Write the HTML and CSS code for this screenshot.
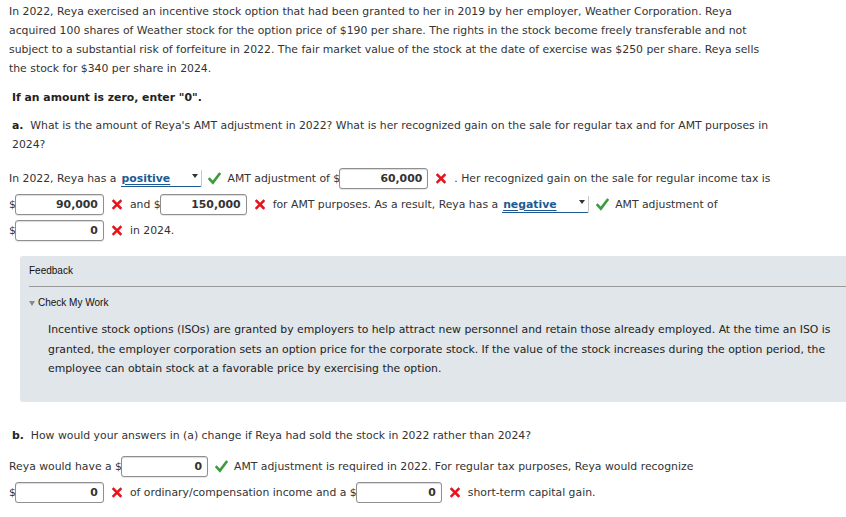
FILE: index.html
```html
<!DOCTYPE html>
<html>
<head>
<meta charset="utf-8">
<link rel="stylesheet" href="styles.css">
</head>
<body>
<div class="page">
  <p class="intro">In 2022, Reya exercised an incentive stock option that had been granted to her in 2019 by her employer, Weather Corporation. Reya<br>acquired 100 shares of Weather stock for the option price of $190 per share. The rights in the stock become freely transferable and not<br>subject to a substantial risk of forfeiture in 2022. The fair market value of the stock at the date of exercise was $250 per share. Reya sells<br>the stock for $340 per share in 2024.</p>

  <p class="note">If an amount is zero, enter "0".</p>

  <p class="question"><b>a.</b>&nbsp; What is the amount of Reya's AMT adjustment in 2022? What is her recognized gain on the sale for regular tax and for AMT purposes in<br>2024?</p>

  <div class="answer">
    <div class="row">In 2022, Reya has a<span class="select sel-pos">positive<span class="caret"></span></span><span class="mark ok"><svg viewBox="0 0 12 12"><path d="M1.5 6.5 L4.5 9.8 L10.5 1.8" /></svg></span>AMT adjustment of $<span class="inp w88">60,000</span><span class="mark bad"><svg viewBox="0 0 10 10"><path d="M1.5 1.5 L8.5 8.5 M8.5 1.5 L1.5 8.5" /></svg></span>. Her recognized gain on the sale for regular income tax is</div>
    <div class="row">$<span class="inp w88">90,000</span><span class="mark bad"><svg viewBox="0 0 10 10"><path d="M1.5 1.5 L8.5 8.5 M8.5 1.5 L1.5 8.5" /></svg></span>and $<span class="inp w87">150,000</span><span class="mark bad"><svg viewBox="0 0 10 10"><path d="M1.5 1.5 L8.5 8.5 M8.5 1.5 L1.5 8.5" /></svg></span>for AMT purposes. As a result, Reya has a<span class="select sel-neg">negative<span class="caret"></span></span><span class="mark ok"><svg viewBox="0 0 12 12"><path d="M1.5 6.5 L4.5 9.8 L10.5 1.8" /></svg></span>AMT adjustment of</div>
    <div class="row">$<span class="inp w88">0</span><span class="mark bad"><svg viewBox="0 0 10 10"><path d="M1.5 1.5 L8.5 8.5 M8.5 1.5 L1.5 8.5" /></svg></span>in 2024.</div>
  </div>

  <div class="feedback">
    <div class="fb-title">Feedback</div>
    <div class="fb-rule"></div>
    <div class="fb-check"><span class="tri"></span>Check My Work</div>
    <p class="fb-text">Incentive stock options (ISOs) are granted by employers to help attract new personnel and retain those already employed. At the time an ISO is<br>granted, the employer corporation sets an option price for the corporate stock. If the value of the stock increases during the option period, the<br>employee can obtain stock at a favorable price by exercising the option.</p>
  </div>

  <p class="question qb"><b>b.</b>&nbsp; How would your answers in (a) change if Reya had sold the stock in 2022 rather than 2024?</p>

  <div class="answer answer-b">
    <div class="row">Reya would have a $<span class="inp w87">0</span><span class="mark ok"><svg viewBox="0 0 12 12"><path d="M1.5 6.5 L4.5 9.8 L10.5 1.8" /></svg></span>AMT adjustment is required in 2022. For regular tax purposes, Reya would recognize</div>
    <div class="row">$<span class="inp w88">0</span><span class="mark bad"><svg viewBox="0 0 10 10"><path d="M1.5 1.5 L8.5 8.5 M8.5 1.5 L1.5 8.5" /></svg></span>of ordinary/compensation income and a $<span class="inp w86">0</span><span class="mark bad"><svg viewBox="0 0 10 10"><path d="M1.5 1.5 L8.5 8.5 M8.5 1.5 L1.5 8.5" /></svg></span>short-term capital gain.</div>
  </div>
</div>
</body>
</html>
```

FILE: styles.css
```css
html, body {
  margin: 0;
  padding: 0;
  background: #ffffff;
}

.page {
  font-family: "DejaVu Sans", Verdana, sans-serif;
  font-size: 10.85px;
  color: #333333;
  padding: 2px 0 0 9px;
}

p {
  margin: 0;
}

.intro {
  line-height: 19px;
}

.note {
  font-weight: bold;
  color: #222222;
  margin: 10px 0 0 3px;
  line-height: 19px;
}

.question {
  margin: 9px 0 0 3px;
  line-height: 19px;
}

.question b {
  color: #222222;
}

.answer {
  margin-top: 14px;
  display: flex;
  flex-direction: column;
  gap: 5px;
}

.row {
  display: flex;
  align-items: center;
  height: 21px;
  white-space: nowrap;
}

.inp {
  box-sizing: border-box;
  display: inline-block;
  height: 21px;
  line-height: 19px;
  border: 1px solid #8f8f8f;
  border-radius: 3px;
  background: #ffffff;
  box-shadow: inset 0 1px 1px rgba(0,0,0,0.15), 0 1px 1px rgba(0,0,0,0.1);
  text-align: right;
  font-weight: bold;
  color: #333333;
  padding-right: 5px;
  margin-left: -1px;
  position: relative;
}

.w88 { width: 89px; }
.w87 { width: 87px; }
.w86 { width: 86px; }

.select {
  display: inline-flex;
  align-items: center;
  justify-content: space-between;
  box-sizing: border-box;
  height: 17px;
  margin-left: 4px;
  border-bottom: 1px solid #1d5a93;
  border-right: 1px solid #c8c8c8;
  border-radius: 0 0 2px 0;
  color: #1d5a93;
  font-weight: bold;
  padding: 0 3px 0 1px;
  text-decoration: underline;
  text-decoration-thickness: 1px;
  text-underline-offset: 2px;
}

.sel-pos { width: 81px; }
.sel-neg { width: 87px; }

.caret {
  width: 0;
  height: 0;
  border-left: 3px solid transparent;
  border-right: 3px solid transparent;
  border-top: 4px solid #333333;
  margin-bottom: 4px;
}

.mark {
  display: inline-flex;
  align-items: center;
  justify-content: center;
  width: 26px;
}

.mark svg {
  fill: none;
  stroke-linecap: square;
}

.ok svg {
  width: 13px;
  height: 13px;
  stroke: #3c9b3c;
  stroke-width: 2.4;
}

.bad svg {
  width: 10px;
  height: 11px;
  stroke: #e8141c;
  stroke-width: 2.6;
}

.feedback {
  margin: 15px 0 0 11px;
  background: #e0e6e9;
  border-radius: 3px 0 0 3px;
  padding: 8px 0 23px 9px;
}

.fb-title {
  font-family: "Liberation Sans", Arial, sans-serif;
  font-size: 10px;
  color: #111111;
  line-height: 14px;
}

.fb-rule {
  height: 1px;
  background: #999999;
  margin-top: 8px;
}

.fb-check {
  font-family: "Liberation Sans", Arial, sans-serif;
  font-size: 10px;
  color: #111111;
  line-height: 14px;
  margin-top: 9px;
  display: flex;
  align-items: center;
}

.tri {
  width: 0;
  height: 0;
  border-left: 3px solid transparent;
  border-right: 3px solid transparent;
  border-top: 5px solid #888888;
  margin-right: 3px;
}

.fb-text {
  margin: 10px 0 0 19px;
  line-height: 19.5px;
  color: #222222;
}

.qb {
  margin-top: 24px;
}

.answer-b {
  margin-top: 11px;
}
```
